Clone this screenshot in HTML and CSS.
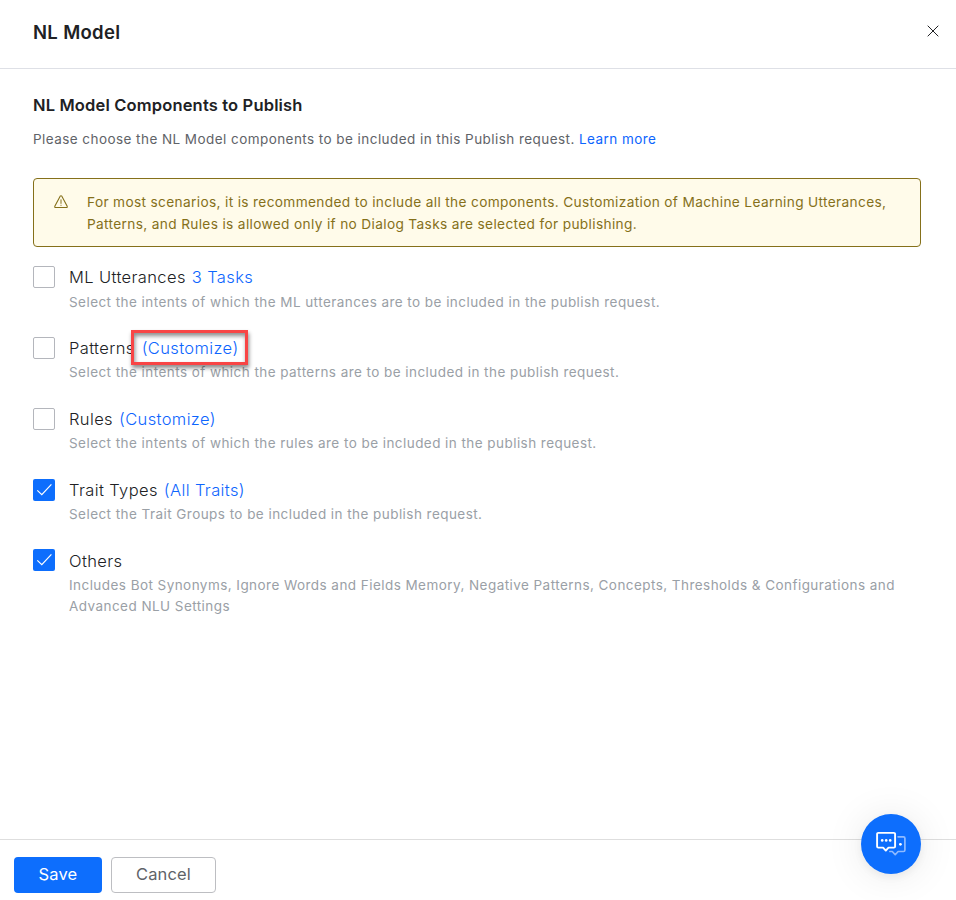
FILE: index.html
```html
<!DOCTYPE html>
<html lang="en">
<head>
<meta charset="utf-8">
<title>NL Model</title>
<link rel="stylesheet" href="styles.css">
</head>
<body>
<div class="dialog">
  <header class="header">
    <h1 class="title">NL Model</h1>
    <button class="close" aria-label="Close"><svg width="12" height="12" viewBox="0 0 12 12"><path d="M.7.7l10.6 10.6M11.3.7L.7 11.3" fill="none" stroke="#202124" stroke-width="1"/></svg></button>
  </header>
  <main class="body">
    <h2 class="heading">NL Model Components to Publish</h2>
    <p class="intro">Please choose the NL Model components to be included in this Publish request. <a>Learn more</a></p>
    <div class="notice">
      <svg class="warn" width="14" height="14" viewBox="0 0 14 14" fill="none" stroke="#85701a" stroke-width="1.1" stroke-linejoin="round" stroke-linecap="round"><path d="M6.3 1.1a.8.8 0 0 1 1.400 0l5.500 10.200a.8.8 0 0 1-.7 1.200h-11a.8.8 0 0 1-.7-1.200z"/><path d="M7 4.800v3.600M7 10.200v.2" stroke-width="1"/></svg>
      <p class="notice-text">For most scenarios, it is recommended to include all the components. Customization of Machine Learning Utterances,<br>Patterns, and Rules is allowed only if no Dialog Tasks are selected for publishing.</p>
    </div>
    <ul class="list">
      <li class="item">
        <span class="box"></span>
        <div><div class="name"><span>ML Utterances</span><a>3 Tasks</a></div><p class="desc">Select the intents of which the ML utterances are to be included in the publish request.</p></div>
      </li>
      <li class="item">
        <span class="box"></span>
        <div><div class="name"><span>Patterns</span><a class="marked">(Customize)</a></div><p class="desc">Select the intents of which the patterns are to be included in the publish request.</p></div>
      </li>
      <li class="item">
        <span class="box"></span>
        <div><div class="name"><span>Rules</span><a>(Customize)</a></div><p class="desc">Select the intents of which the rules are to be included in the publish request.</p></div>
      </li>
      <li class="item">
        <span class="box checked"><svg width="22" height="22" viewBox="0 0 22 22"><path d="M4.300 11.400l4.500 4.300 9.600-10.400" fill="none" stroke="#fff" stroke-width="1.2"/></svg></span>
        <div><div class="name"><span>Trait Types</span><a>(All Traits)</a></div><p class="desc">Select the Trait Groups to be included in the publish request.</p></div>
      </li>
      <li class="item">
        <span class="box checked"><svg width="22" height="22" viewBox="0 0 22 22"><path d="M4.300 11.400l4.500 4.300 9.600-10.400" fill="none" stroke="#fff" stroke-width="1.2"/></svg></span>
        <div><div class="name"><span>Others</span></div><p class="desc">Includes Bot Synonyms, Ignore Words and Fields Memory, Negative Patterns, Concepts, Thresholds &amp; Configurations and<br>Advanced NLU Settings</p></div>
      </li>
    </ul>
  </main>
  <footer class="footer">
    <button class="btn save">Save</button>
    <button class="btn cancel">Cancel</button>
  </footer>
  <button class="chat" aria-label="Chat">
    <svg width="32" height="28" viewBox="0 0 32 28" fill="none" stroke-linejoin="round" stroke-linecap="round">
      <path d="M23.100 6.800h5.400a1.400 1.400 0 0 1 1.400 1.400v11.900a1.400 1.400 0 0 1-1.400 1.400h-5.400l-2.900 3.200-2.900-3.200h-2.400" stroke="#8fbaff" stroke-width="1.700"/>
      <path d="M3.300 2.900h15.600a1.200 1.200 0 0 1 1.200 1.200v12.300a1.200 1.200 0 0 1-1.200 1.200h-5.400l-2.700 3-2.700-3H3.300a1.200 1.200 0 0 1-1.200-1.200V4.100A1.200 1.200 0 0 1 3.300 2.900z" stroke="#fff" stroke-width="1.900"/>
      <g fill="#fff"><circle cx="7.200" cy="10.400" r="1.300"/><circle cx="11.200" cy="10.400" r="1.300"/><circle cx="15.200" cy="10.400" r="1.300"/><circle cx="25.400" cy="14.300" r="1.400"/></g>
    </svg>
  </button>
</div>
</body>
</html>
```
FILE: styles.css
```css
*, *::after { box-sizing: border-box; }
body { margin: 0; background: #fff; font-family: Inter, "Liberation Sans", sans-serif; color: #202124; }
h1, h2, p, ul { margin: 0; padding: 0; }
a { color: #0d65fe; }
button { font: inherit; padding: 0; }
.dialog { position: relative; height: 900px; display: flex; flex-direction: column; overflow: hidden; }
.header { height: 69px; flex: none; display: flex; justify-content: space-between; padding: 20px 17px 0 33px; border-bottom: 1px solid #dee0e6; }
.title { font-size: 18.5px; line-height: 25px; font-weight: 600; letter-spacing: .32px; }
.close { width: 12px; height: 12px; margin-top: 5px; border: 0; background: none; display: flex; }
.body { flex: 1; padding: 25px 35px 0 33px; }
.heading { font-size: 16.5px; line-height: 22px; font-weight: 600; letter-spacing: .16px; }
.intro { margin-top: 13px; font-size: 13.5px; line-height: 20px; letter-spacing: .44px; color: #5f6368; white-space: nowrap; }
.notice { margin-top: 29px; height: 69px; border: 1px solid #85701a; border-radius: 4px; background: #fffbea; display: flex; padding: 12px 0 0 20px; }
.warn { margin-top: 4px; flex: none; overflow: visible; }
.notice-text { margin-left: 19px; font-size: 13.7px; line-height: 22px; letter-spacing: .34px; color: #85701a; white-space: nowrap; }
.list { list-style: none; margin-top: 19px; }
.item { display: flex; gap: 14px; height: 71px; }
.item:nth-child(n+5) .box { margin-top: -1px; }
.box { width: 22px; height: 22px; flex: none; border: 1px solid #b4b6bc; border-radius: 2px; }
.checked { border: 0; background: #0d6efd; }
.checked svg { display: block; }
.name { display: flex; gap: 6px; font-size: 16.5px; line-height: 22px; letter-spacing: .38px; font-weight: 320; }
.marked { position: relative; margin-left: 1px; }
.marked::after { content: ""; position: absolute; left: -11px; top: -7px; width: 117px; height: 35px; border: 3px solid #f84545; box-shadow: 1px 3px 4px rgba(0,0,0,.45), inset 1px 3px 4px rgba(0,0,0,.45); }
.desc { margin-top: 4px; font-size: 13.5px; line-height: 21px; letter-spacing: .445px; color: #9aa0a6; white-space: nowrap; }
.item:nth-child(n+2) .desc { margin-top: 3px; }
.footer { flex: none; height: 61px; border-top: 1px solid #dedede; display: flex; gap: 9px; padding: 17px 14px; }
.btn { height: 36px; border-radius: 4px; font-size: 16.5px; line-height: 20px; letter-spacing: .15px; padding-bottom: 2px; }
.save { width: 88px; border: 0; background: #0d6efd; color: #fff; }
.cancel { width: 105px; border: 1px solid #bdbec2; background: #fff; color: #5f6368; }
.chat { position: absolute; left: 861px; top: 814px; width: 60px; height: 60px; border: 0; border-radius: 50%; background: #0d6efd; box-shadow: 0 2px 40px rgba(0,0,0,.09), 0 3px 8px rgba(0,0,0,.06); display: flex; align-items: center; justify-content: center; }
```
